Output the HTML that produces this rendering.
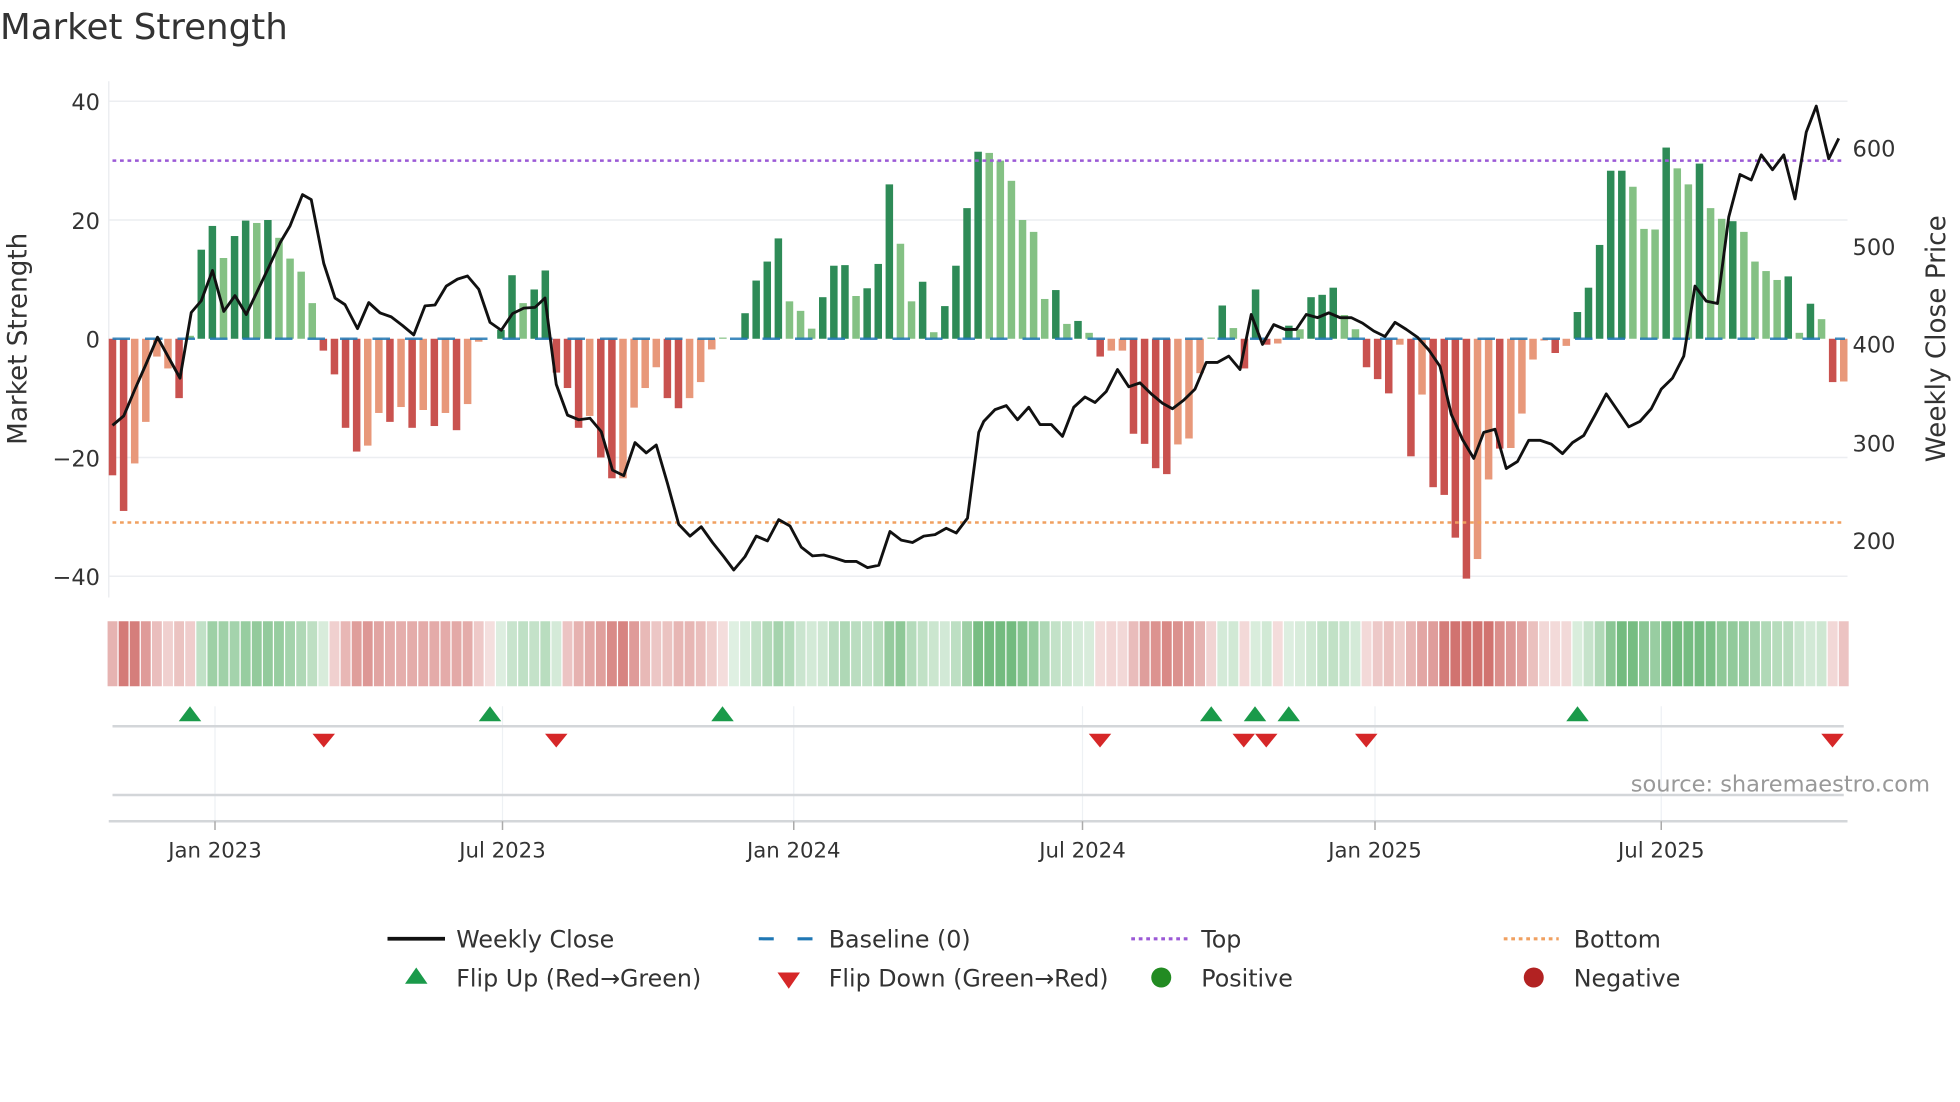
<!DOCTYPE html>
<html><head><meta charset="utf-8"><style>
html,body{margin:0;padding:0;background:#fff;overflow:hidden}
svg{display:block}
text{font-family:"DejaVu Sans","Liberation Sans",sans-serif;fill:#333}
</style></head><body>
<svg id="s" width="1960" height="1102" viewBox="0 0 1568 881.6" preserveAspectRatio="none" xmlns="http://www.w3.org/2000/svg">
<text x="0" y="31" font-size="28.5" fill="#333">Market Strength</text>
<g stroke="#eceef1" stroke-width="1.2">
<line x1="87" y1="81" x2="1478" y2="81"/><line x1="87" y1="176" x2="1478" y2="176"/>
<line x1="87" y1="366" x2="1478" y2="366"/><line x1="87" y1="461" x2="1478" y2="461"/>
<line x1="87" y1="65" x2="87" y2="478"/>
</g>
<g font-size="18" text-anchor="end">
<text x="80" y="88">40</text><text x="80" y="183">20</text><text x="80" y="278">0</text>
<text x="80" y="373">−20</text><text x="80" y="468">−40</text>
</g>
<g font-size="18">
<text x="1482" y="125">600</text><text x="1482" y="204">500</text><text x="1482" y="282">400</text>
<text x="1482" y="361">300</text><text x="1482" y="439">200</text>
</g>
<text font-size="21" text-anchor="middle" transform="translate(21,271) rotate(-90)">Market Strength</text>
<text font-size="21" text-anchor="middle" transform="translate(1556,271) rotate(-90)">Weekly Close Price</text>
<g id="bars"></g>
<line x1="90" y1="271" x2="1476" y2="271" stroke="#1f77b4" stroke-width="2" stroke-dasharray="14,12" opacity="0.85"/>
<line x1="90" y1="128.5" x2="1476" y2="128.5" stroke="#9b59d6" stroke-width="2" stroke-dasharray="3,3"/>
<line x1="90" y1="418" x2="1476" y2="418" stroke="#f0a060" stroke-width="2" stroke-dasharray="3,3"/>
<polyline id="pl" fill="none" stroke="#111" stroke-width="2.3" stroke-linejoin="round"/>
<g id="strip"></g>
<g stroke="#eef1f4" stroke-width="1">
<line x1="172" y1="565" x2="172" y2="656"/><line x1="402" y1="565" x2="402" y2="656"/>
<line x1="635" y1="565" x2="635" y2="656"/><line x1="866" y1="565" x2="866" y2="656"/>
<line x1="1100" y1="565" x2="1100" y2="656"/><line x1="1329" y1="565" x2="1329" y2="656"/>
</g>
<line x1="90" y1="581" x2="1475" y2="581" stroke="#d3d6d9" stroke-width="2"/>
<line x1="90" y1="636" x2="1475" y2="636" stroke="#d3d6d9" stroke-width="2"/>
<line x1="87" y1="657" x2="1478" y2="657" stroke="#d3d6d9" stroke-width="2"/>
<g stroke="#aaa" stroke-width="1.2">
<line x1="172" y1="657" x2="172" y2="664"/><line x1="402" y1="657" x2="402" y2="664"/>
<line x1="635" y1="657" x2="635" y2="664"/><line x1="866" y1="657" x2="866" y2="664"/>
<line x1="1100" y1="657" x2="1100" y2="664"/><line x1="1329" y1="657" x2="1329" y2="664"/>
</g>
<g id="tri"></g>
<text x="1544" y="633" font-size="18" text-anchor="end" style="fill:#999">source: sharemaestro.com</text>
<g font-size="17" text-anchor="middle">
<text x="172" y="686">Jan 2023</text><text x="402" y="686">Jul 2023</text><text x="635" y="686">Jan 2024</text>
<text x="866" y="686">Jul 2024</text><text x="1100" y="686">Jan 2025</text><text x="1329" y="686">Jul 2025</text>
</g>
<line x1="310" y1="751" x2="356" y2="751" stroke="#111" stroke-width="3"/>
<line x1="607" y1="751" x2="650" y2="751" stroke="#1f77b4" stroke-width="2.5" stroke-dasharray="12,19"/>
<line x1="905" y1="751" x2="950" y2="751" stroke="#9b59d6" stroke-width="2.5" stroke-dasharray="3,3"/>
<line x1="1203" y1="751" x2="1247" y2="751" stroke="#f0a060" stroke-width="2.5" stroke-dasharray="3,3"/>
<polygon points="333,774 324,787 342,787" fill="#1a9a4a"/>
<polygon points="622,778 640,778 631,791" fill="#d62728"/>
<circle cx="929" cy="782" r="8" fill="#228b22"/>
<circle cx="1227" cy="782" r="8" fill="#b22222"/>
<g font-size="19">
<text x="365" y="758">Weekly Close</text><text x="663" y="758">Baseline (0)</text>
<text x="961" y="758">Top</text><text x="1259" y="758">Bottom</text>
<text x="365" y="789">Flip Up (Red→Green)</text><text x="663" y="789">Flip Down (Green→Red)</text>
<text x="961" y="789">Positive</text><text x="1259" y="789">Negative</text>
</g>
</svg>
<script>
var B="-23d -29d -21l -14l -3l -5l -10d 0.5g 15G 19G 13.6g 17.3G 19.9G 19.5g 20G 17g 13.5g 11.3g 6g -2d -6d -15d -19d -18l -12.5l -14d -11.5l -15d -12l -14.7d -12.5l -15.4d -11l -0.5l 0g 1.5G 10.7G 6g 8.3G 11.5G -5.7d -8.3d -15d -13l -20d -23.5d -23.5l -11.6l -8.3l -4.8l -10d -11.7d -10l -7.3l -1.8l 0.2g 0g 4.3G 9.8G 13G 16.9G 6.3g 4.7g 1.7g 7G 12.3G 12.4G 7.2g 8.5G 12.6G 26G 16g 6.3g 9.6G 1.1g 5.5G 12.3G 22G 31.5G 31.3g 30g 26.6g 20g 18g 6.7g 8.2G 2.5g 3G 1g -3d -2l -2l -16d -17.7d -21.8d -22.8d -17.8l -16.8l -5.8l 0.2g 5.6G 1.8g -5d 8.3G -1d -0.8l 2.2G 1.6g 7G 7.4G 8.6G 4g 1.6g -4.8d -6.8d -9.2d -1l -19.8d -9.4l -25d -26.3d -33.5d -40.4d -37.1l -23.7l -18.5d -18.4l -12.6l -3.5l -0.3l -2.4d -1.2l 4.5G 8.6G 15.8G 28.3G 28.3G 25.6g 18.5g 18.4g 32.2G 28.7g 26g 29.5G 22g 20.2g 19.8G 18g 13g 11.4g 9.9g 10.5G 1g 5.9G 3.3g -7.3d -7.2l".split(" ");
var C={d:"#c9524f",l:"#e8987a",G:"#2e8b57",g:"#84c184"};
var N=B.length,x0=90,x1=1475,sp=(x1-x0)/(N-1),h="",st="";
var prev=0;
for(var i=0;i<N;i++){var v=parseFloat(B[i]),c=B[i].slice(-1),x=x0+i*sp;
var y=271-v*4.75;h+='<rect x="'+(x-3)+'" y="'+Math.min(y,271)+'" width="6" height="'+Math.abs(y-271)+'" fill="'+C[c]+'"/>';
var sv=(v+prev)/2;prev=v;var a=Math.min(0.8,0.18+Math.abs(sv)/45);
var col=sv>=0?"rgba(80,170,95,"+a+")":"rgba(198,80,76,"+a+")";
st+='<rect x="'+(x-sp/2+0.5)+'" y="497" width="'+(sp-1)+'" height="52" fill="'+col+'"/>';}
document.getElementById("bars").innerHTML=h;document.getElementById("strip").innerHTML=st;
var P1=[[180,1082],[198,1058],[216,990],[234,925],[252,858],[270,910],[288,962],[306,795],[322,765],[340,688],[358,792],[376,752],[394,800],[412,740],[430,680],[448,618],[464,575],[484,495],[498,508],[518,670],[536,758],[552,775],[572,836],[590,770],[608,796],[626,806],[644,828],[662,852],[680,778],[696,776],[714,728],[732,710],[748,702],[766,736],[784,820],[802,840],[820,798],[838,784],[856,782],[872,758],[890,978],[908,1056],[926,1068],[944,1064],[962,1098],[980,1196],[998,1210],[1016,1126],[1034,1152],[1050,1132],[1068,1230],[1086,1334],[1104,1364],[1122,1340],[1140,1380],[1158,1416],[1174,1450],[1192,1416],[1210,1364],[1228,1376],[1246,1322],[1264,1338],[1282,1392],[1300,1414],[1318,1412],[1336,1420],[1352,1428],[1370,1428],[1388,1444],[1406,1438],[1424,1352],[1442,1374],[1460,1380],[1478,1364],[1496,1360],[1514,1344],[1530,1356],[1548,1318],[1566,1100]];
var P2=[[14,1072],[32,1042],[50,1032],[68,1068],[86,1036],[104,1080],[122,1080],[140,1110],[158,1036],[176,1010],[192,1024],[210,996],[228,940],[246,984],[264,974],[282,1002],[300,1026],[316,1040],[334,1018],[352,990],[370,922],[388,922],[406,906],[424,940],[442,800],[460,876],[478,826],[496,838],[514,838],[530,800],[548,808],[566,796],[584,808],[602,808],[620,822],[638,842],[656,856],[672,820],[690,838],[708,858],[726,890],[744,932],[762,1054],[780,1118],[798,1166],[814,1100],[832,1092],[850,1192],[868,1174],[886,1120],[904,1120],[922,1130],[940,1154],[956,1126],[974,1108],[992,1056],[1010,1002],[1028,1044],[1046,1086],[1064,1072],[1082,1040],[1098,990],[1116,962],[1134,906],[1152,728],[1170,766],[1188,772],[1206,552],[1224,444],[1242,458],[1258,394],[1276,432],[1294,394],[1312,506],[1330,336],[1346,270],[1366,404],[1382,352]];
var pts=[];P1.forEach(function(p){pts.push((p[0]/2).toFixed(1)+","+(p[1]/3.18).toFixed(1))});
P2.forEach(function(p){pts.push((p[0]/2+780).toFixed(1)+","+(p[1]/3.18).toFixed(1))});
document.getElementById("pl").setAttribute("points",pts.join(" "));
var t="";[152,392,578,969,1004,1031,1262].forEach(function(x){t+='<polygon points="'+x+',565 '+(x-9)+',577 '+(x+9)+',577" fill="#1a9a4a"/>'});
[259,445,880,995,1013,1093,1466].forEach(function(x){t+='<polygon points="'+(x-9)+',587 '+(x+9)+',587 '+x+',598" fill="#d62728"/>'});
document.getElementById("tri").innerHTML=t;
</script>
</body></html>
